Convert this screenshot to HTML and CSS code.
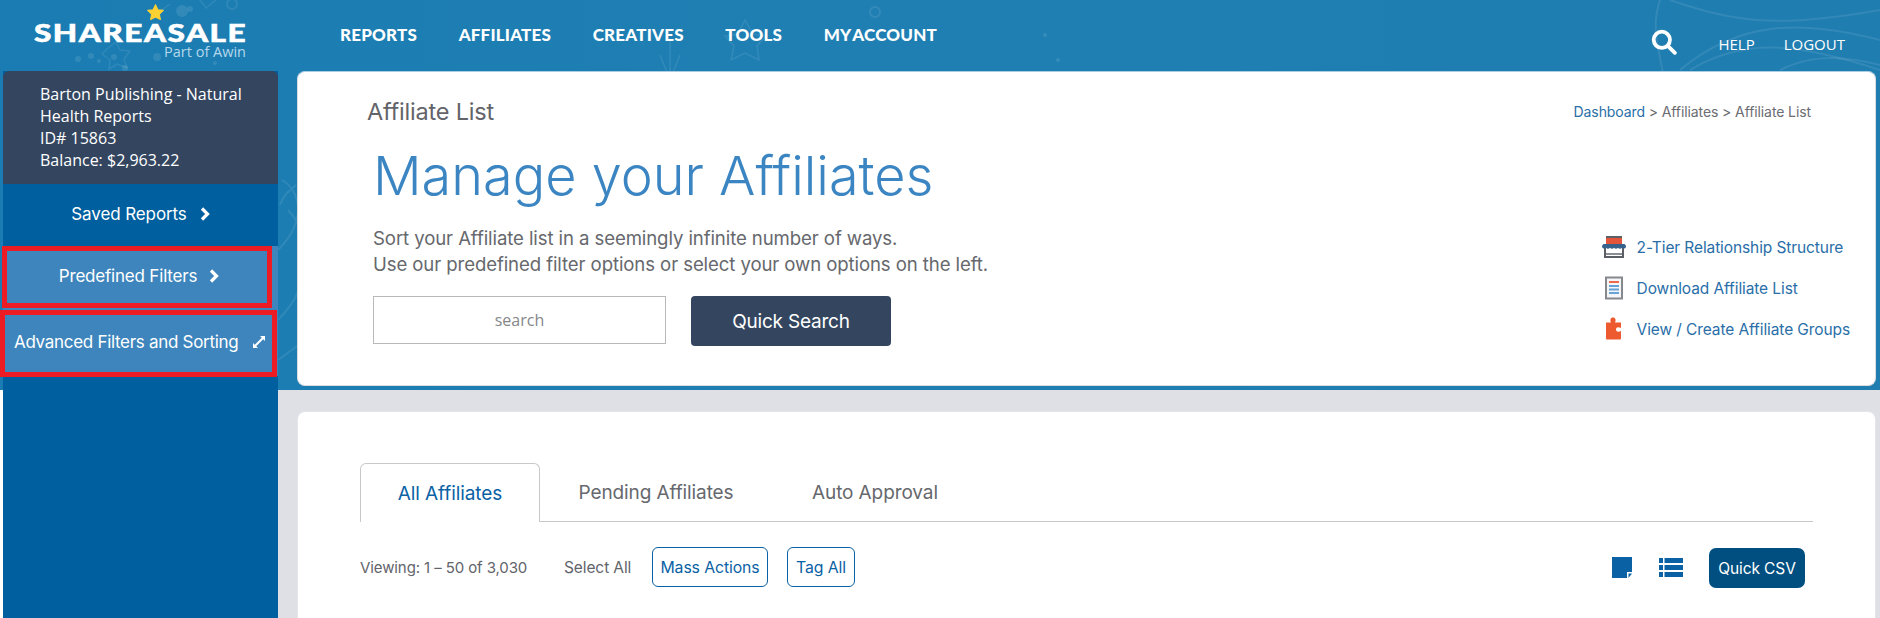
FILE: index.html
```html
<!DOCTYPE html>
<html lang="en">
<head>
<meta charset="utf-8">
<title>Affiliate List</title>
<link rel="stylesheet" href="styles.css">
</head>
<body>
<div class="page">
  <svg class="hero-bg" viewBox="0 0 1880 390" preserveAspectRatio="none" aria-hidden="true">
    <defs>
      <linearGradient id="heroGrad" x1="0" y1="0" x2="1" y2="0">
        <stop offset="0" stop-color="#1a7cb2"/>
        <stop offset="0.4" stop-color="#1f7fb3"/>
        <stop offset="1" stop-color="#1f7db0"/>
      </linearGradient>
    </defs>
    <rect width="1880" height="390" fill="url(#heroGrad)"/>
    <g fill="none" stroke="#fff" stroke-opacity=".09" stroke-width="2">
      <path d="M1660 0c-10 30 0 50 4 80s-4 50 0 70"/>
      <path d="M1670 0c60 20 100 30 210 10"/>
      <path d="M1680 70c60-50 120-50 200-30"/>
      <path d="M1690 70c50-30 100-30 190 0"/>
      <path d="M1780 70c30-15 60-15 100-5"/>
      <path d="M745 20l8 14 13 2-9 10 2 14-14-7-14 7 3-14-9-10 13-2z" stroke-width="1.5"/>
      <path d="M670 40v40M660 55l10 25 10-25" stroke-width="1.5"/>
      <path d="M170 4l-14 10M200 0l6 8 10-8" stroke-width="1.5"/>
      <path d="M108 48l8 -6 4 8 10 1-6 8 3 9-10-4-8 5 1-9-8-6z" stroke-width="1.5"/>
      <path d="M278 250c30-30 22-60 4-70M278 320c40-40 30-90 10-110M280 205c4-12 10-14 16-20M278 360c8-6 14-10 19-14"/>
      <circle cx="232" cy="4" r="5"/><circle cx="875" cy="12" r="5"/>
    </g>
    <g fill="#fff" fill-opacity=".1">
      <circle cx="182" cy="11" r="6"/><circle cx="190" cy="9" r="3"/>
      <circle cx="78" cy="59" r="3"/><circle cx="91" cy="56" r="3"/><circle cx="114" cy="57" r="3"/>
      <circle cx="157" cy="57" r="4"/><circle cx="125" cy="68" r="3"/><circle cx="99" cy="61" r="2"/>
      <circle cx="215" cy="63" r="2"/><circle cx="1045" cy="35" r="2"/><circle cx="1058" cy="60" r="2"/>
    </g>
  </svg>

  <header class="topbar">
    <a class="logo" href="#">
      <svg class="logo-star" viewBox="0 0 24 24" aria-hidden="true"><path d="M12 1l3.400 7 7.600 1-5.500 5.300 1.400 7.700-6.900-3.700L5.100 22l1.400-7.700L1 9l7.600-1z" fill="#fbd033" stroke="#fbd033" stroke-linejoin="round" stroke-width="1.500"/></svg>
      <span class="logo-name">SHAREASALE</span>
      <span class="logo-sub">Part of Awin</span>
    </a>
    <nav class="mainnav">
      <a href="#">REPORTS</a>
      <a href="#">AFFILIATES</a>
      <a href="#">CREATIVES</a>
      <a href="#">TOOLS</a>
      <a href="#">MY ACCOUNT</a>
    </nav>
    <div class="topright">
      <svg class="search-icon" viewBox="0 0 24 24" aria-hidden="true"><circle cx="10" cy="10" r="7.500" fill="none" stroke="#fff" stroke-width="3.500"/><path d="M15.500 15.500L22 22" stroke="#fff" stroke-width="3.500" stroke-linecap="round"/></svg>
      <a class="help" href="#">HELP</a>
      <a class="logout" href="#">LOGOUT</a>
    </div>
  </header>

  <div class="layout">
    <aside class="sidebar">
      <div class="account">
        <div>Barton Publishing - Natural Health Reports</div>
        <div>ID# 15863</div>
        <div>Balance: $2,963.22</div>
      </div>
      <a class="side-item saved" href="#">Saved Reports
        <svg class="chev" viewBox="0 0 10 14" aria-hidden="true"><path d="M2 1.500L7.500 7 2 12.500" fill="none" stroke="#fff" stroke-width="3.200"/></svg>
      </a>
      <a class="side-item light predefined" href="#">Predefined Filters
        <svg class="chev" viewBox="0 0 10 14" aria-hidden="true"><path d="M2 1.500L7.500 7 2 12.500" fill="none" stroke="#fff" stroke-width="3.200"/></svg>
      </a>
      <a class="side-item light advanced" href="#">Advanced Filters and Sorting
        <svg class="expand" viewBox="0 0 14 14" aria-hidden="true"><path d="M2.500 11.500L11.500 2.500" stroke="#fff" stroke-width="2"/><path d="M8 1h5v5zM1 8v5h5z" fill="#fff"/></svg>
      </a>
    </aside>

    <main class="content">
      <section class="intro-wrap">
        <div class="card intro">
          <div class="intro-head">
            <h2 class="page-title">Affiliate List</h2>
            <div class="crumbs"><a href="#">Dashboard</a> &gt; Affiliates &gt; Affiliate List</div>
          </div>
          <div class="intro-body">
            <div class="intro-main">
              <h1>Manage your Affiliates</h1>
              <p>Sort your Affiliate list in a seemingly infinite number of ways.<br>Use our predefined filter options or select your own options on the left.</p>
              <form class="quick">
                <input class="quick-input" type="text" placeholder="search">
                <button class="quick-btn" type="button">Quick Search</button>
              </form>
            </div>
            <ul class="tools">
              <li>
                <svg viewBox="0 0 26 24" aria-hidden="true"><path d="M5 2.500h16v7H5z" fill="#e2553a"/><path d="M5 2h16M4 9v13h18V9" fill="none" stroke="#5c6066" stroke-width="2"/><path d="M5 19h16" stroke="#8a8d92" stroke-width="2"/><path d="M1 12c0-2 1-3 2-3h20c1 0 2 1 2 3-1 2-3 2-4 .8-1 1.400-3 1.400-4 0-1 1.400-3 1.400-4 0-1 1.400-3 1.400-4 0-1 1.400-3 1.400-4 0-1 1.200-3 1.200-4-.8z" fill="#34628c"/></svg>
                <a href="#">2-Tier Relationship Structure</a>
              </li>
              <li>
                <svg viewBox="0 0 26 24" aria-hidden="true"><path d="M5 1.500h16v21H5z" fill="#f4f6f8" stroke="#85888d" stroke-width="2"/><path d="M8 6h10" stroke="#ef6a4c" stroke-width="2"/><path d="M8 10h10M8 13.500h10M8 17h10" stroke="#68a2d6" stroke-width="2"/></svg>
                <a href="#">Download Affiliate List</a>
              </li>
              <li>
                <svg viewBox="0 0 26 24" aria-hidden="true"><path d="M5 5.500h5c-1.500-3 0-5 2-5s3.500 2 2 5h6v5.500c-3-1.500-5-.5-5 1.500s2 3 5 1.500v7.500a1 1 0 0 1-1 1H6a1 1 0 0 1-1-1z" fill="#ee5a2f"/></svg>
                <a href="#">View / Create Affiliate Groups</a>
              </li>
            </ul>
          </div>
        </div>
      </section>

      <section class="list-wrap">
        <div class="card list">
          <div class="tabs">
            <a class="tab tab-all active" href="#">All Affiliates</a>
            <a class="tab tab-pending" href="#">Pending Affiliates</a>
            <a class="tab tab-auto" href="#">Auto Approval</a>
          </div>
          <div class="toolbar">
            <span class="viewing">Viewing: 1 – 50 of 3,030</span>
            <span class="select-all">Select All</span>
            <button class="outline-btn mass" type="button">Mass Actions</button>
            <button class="outline-btn tag" type="button">Tag All</button>
            <div class="toolbar-right">
              <svg class="note-icon" viewBox="0 0 20 21" aria-hidden="true"><path d="M0 0h20v15h-5v6H0z" fill="#0a62a5"/><path d="M16.500 16.500H20L16.500 21z" fill="#0a62a5"/></svg>
              <svg class="list-icon" viewBox="0 0 24 19" aria-hidden="true"><path d="M0 0h4v5H0zM5.500 0H24v5H5.500zM0 7h4v5H0zM5.500 7H24v5H5.500zM0 14h4v5H0zM5.500 14H24v5H5.500z" fill="#0a62a5"/></svg>
              <button class="csv-btn" type="button">Quick CSV</button>
            </div>
          </div>
        </div>
      </section>
    </main>
  </div>
</div>
</body>
</html>
```
FILE: styles.css
```css
* { box-sizing: border-box; }
html, body { margin: 0; padding: 0; }
body { background: #fff; font-family: "Inter", "Liberation Sans", sans-serif; color: #62646a; }
a { color: inherit; text-decoration: none; }

.page { position: relative; width: 1880px; height: 618px; overflow: hidden; }
.hero-bg { position: absolute; left: 0; top: 0; width: 1880px; height: 390px; }

.topbar { position: relative; display: flex; align-items: flex-start; height: 71px; color: #fff; }
.logo { position: relative; display: block; width: 340px; flex: none; }
.logo-star { position: absolute; left: 147px; top: 4px; width: 17px; height: 17px; }
.logo-name { position: absolute; left: 34px; top: 22px; font: 900 25px/20px "Lato", sans-serif; letter-spacing: 1.200px; -webkit-text-stroke: .6px #fff; transform-origin: left center; transform: scaleX(1.260); }
.logo-sub { position: absolute; right: 94px; top: 44px; font: 400 14.500px/16px "Open Sans", sans-serif; color: #b5d7ea; }

.mainnav { display: flex; gap: 41.600px; padding-top: 25px; font: 900 17px/20px "Lato", sans-serif; letter-spacing: .2px; word-spacing: -2px; }
.topright { display: flex; align-items: center; margin-left: auto; padding: 31px 35px 0 0; font: 400 15px/26px "Open Sans", sans-serif; }
.search-icon { width: 26px; height: 26px; margin-right: 41px; margin-top: -4px; }
.help { margin-right: 29px; }

.layout { position: relative; display: flex; height: 547px; }

.sidebar { flex: none; width: 275px; margin-left: 3px; background: #005f9e; color: #fff; }
.account { height: 113px; padding: 12px 30px 0 37px; background: #34465f; border-radius: 6px 6px 0 0; font: 400 16px/22px "Open Sans", sans-serif; }
.side-item { position: relative; display: flex; align-items: center; justify-content: center; gap: 13px; font-size: 17px; letter-spacing: -.1px; }
.saved { height: 62px; padding-bottom: 2px; }
.light { background: #3d85bc; }
.predefined { height: 63px; padding-right: 3px; padding-bottom: 4px; gap: 12px; letter-spacing: -.2px; }
.advanced { height: 67px; gap: 14px; justify-content: flex-start; padding: 0 0 2px 11px; letter-spacing: -.3px; }
.predefined::after, .advanced::after { content: ""; position: absolute; border: 5px solid #ed1c24; pointer-events: none; }
.predefined::after { left: -1px; right: 6px; top: 0; bottom: 1px; }
.advanced::after { left: -3px; right: 1px; top: 1px; bottom: -1px; }
.chev { width: 10px; height: 14px; }
.expand { width: 14px; height: 14px; }

.content { flex: 1; min-width: 0; display: flex; flex-direction: column; }
.intro-wrap { height: 319px; padding: 0 4px 4px 19px; }
.card { background: #fff; border-radius: 8px; }
.intro { height: 315px; padding: 22px 64px 0 69px; border: 1px solid #d9dde2; border-top-color: #a9cde3; }
.intro-head { display: flex; justify-content: space-between; align-items: center; height: 34px; }
.page-title { margin: 0; font-size: 23.500px; font-weight: 400; letter-spacing: -.2px; color: #62646a; }
.crumbs { font-size: 14px; letter-spacing: -.1px; color: #6b6d72; }
.crumbs a { color: #2a6ea8; }
.intro-body { display: flex; justify-content: space-between; }
.intro-main { padding-left: 6px; }
h1 { margin: 18px 0 0; font-size: 54px; line-height: 60px; font-weight: 300; color: #3b86c2; letter-spacing: 0; }
p { margin: 19px 0 0; font-size: 18.600px; line-height: 26px; letter-spacing: -.1px; color: #66686d; }
.quick { display: flex; gap: 25px; margin-top: 19px; }
.quick-input { width: 293px; height: 48px; border: 1px solid #b9b9b9; text-align: center; font: 400 16px "Open Sans", sans-serif; outline: none; padding: 0; }
.quick-input::placeholder { color: #85878b; opacity: 1; }
.quick-btn { width: 200px; height: 50px; border: 0; border-radius: 4px; background: #34465f; color: #fff; font: 400 19px "Inter", sans-serif; letter-spacing: -.2px; }
.tools { list-style: none; margin: 107px -39px 0 0; padding: 0; display: flex; flex-direction: column; gap: 17px; font-size: 15.500px; letter-spacing: -.1px; color: #2a6ea8; }
.tools li { display: flex; align-items: center; gap: 10px; height: 24px; }
.tools svg { width: 26px; height: 24px; flex: none; }

.list-wrap { flex: 1; background: #dfe0e5; padding: 21px 4px 0 19px; }
.list { height: 300px; border: 1px solid #e4e5e8; padding: 51px 62px 0 62px; }
.tabs { display: flex; border-bottom: 1px solid #c9c9c9; height: 59px; }
.tab { display: flex; align-items: center; justify-content: center; font-size: 19px; letter-spacing: -.1px; color: #66686d; height: 59px; margin-bottom: -1px; }
.tab-all { width: 180px; }
.tab-pending { width: 232px; }
.tab-auto { width: 180px; justify-content: flex-start; padding-left: 40px; }
.tab.active { color: #0a62a5; background: #fff; border: 1px solid #c9c9c9; border-bottom: 0; border-radius: 6px 6px 0 0; }

.toolbar { display: flex; align-items: center; height: 40px; margin-top: 25px; font-size: 15px; letter-spacing: -.1px; }
.viewing { width: 204px; }
.select-all { width: 88px; font-size: 15.500px; }
.outline-btn { height: 40px; background: #fff; border: 1px solid #0a62a5; border-radius: 6px; color: #0a62a5; font: 400 15.800px "Inter", sans-serif; letter-spacing: -.1px; padding: 0; }
.mass { width: 116px; margin-right: 19px; }
.tag { width: 68px; }
.toolbar-right { display: flex; align-items: center; margin-left: auto; margin-right: 8px; }
.note-icon { width: 20px; height: 21px; margin-right: 27px; }
.list-icon { width: 24px; height: 19px; margin-right: 26px; }
.csv-btn { width: 96px; height: 40px; margin-top: 2px; border: 0; border-radius: 7px; background: #004f80; color: #fff; font: 400 15.500px "Inter", sans-serif; letter-spacing: -.1px; padding: 0; }
```
